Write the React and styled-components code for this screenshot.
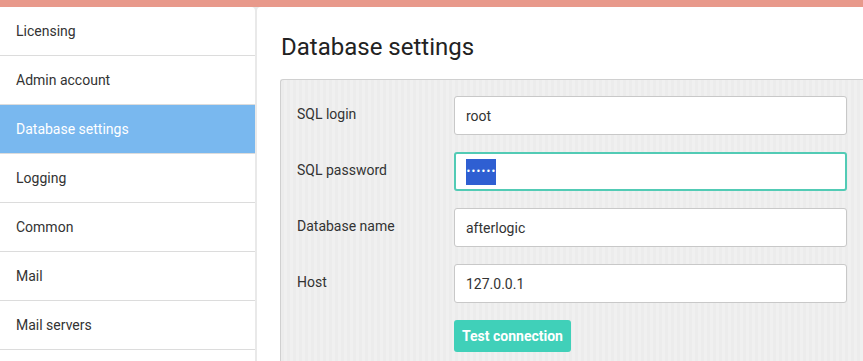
import React from 'react';
import styled, { createGlobalStyle } from 'styled-components';

const Global = createGlobalStyle`
  html, body {
    margin: 0;
    padding: 0;
    background: #e9e9e9;
    font-family: Roboto, "Liberation Sans", sans-serif;
    color: #333;
    overflow: hidden;
  }
`

const TopBar = styled.div`
  height: 7px;
  background: #e8998b;
`

const Layout = styled.div`
  display: flex;
  gap: 2px;
  height: 354px;
  overflow: hidden;
`

const Sidebar = styled.ul`
  list-style: none;
  margin: 0;
  padding: 0;
  width: 255px;
  flex: none;
  background: #fff;
  border-top-right-radius: 4px;
`

const NavItem = styled.li`
  height: 48px;
  display: flex;
  align-items: center;
  padding-left: 16px;
  padding-bottom: 1px;
  box-sizing: border-box;
  height: 49px;
  font-size: 14px;
  border-bottom: 1px solid #dcdcdc;
  background: ${p => (p.$active ? '#79b8ef' : 'transparent')};
  color: ${p => (p.$active ? '#fff' : '#333')};
`

const Panel = styled.div`
  flex: 1;
  background: #fff;
  border-top-left-radius: 4px;
  padding-top: 26px;
`

const Title = styled.h1`
  margin: 0 0 18px 24px;
  font-size: 24px;
  line-height: 28px;
  font-weight: 400;
  color: #222;
`

const Fieldset = styled.div`
  box-sizing: border-box;
  margin-left: 23px;
  height: 290px;
  border: 1px solid #d0d0d0;
  border-right: none;
  border-bottom: none;
  border-top-left-radius: 3px;
  background: repeating-linear-gradient(90deg, #ececec 0 3px, #f0f0f0 3px 6px);
  padding: 16px 0 0 16px;
  display: grid;
  grid-template-columns: 157px 393px;
  grid-auto-rows: 39px;
  row-gap: 17px;
  align-content: start;
  align-items: center;
`

const Label = styled.div`
  font-size: 14px;
  color: #333;
  margin-top: -3px;
`

const Field = styled.div`
  box-sizing: border-box;
  height: 39px;
  background: #fff;
  border: ${p => (p.$focused ? '2px solid #52cbb5' : '1px solid #c8c8c8')};
  border-radius: 3px;
  padding-left: ${p => (p.$focused ? '10px' : '11px')};
  display: flex;
  align-items: center;
  font-size: 14px;
  color: #333;
`

const Selected = styled.span`
  display: inline-flex;
  align-items: center;
  justify-content: center;
  width: 30px;
  height: 26px;
  background: #2f5fd2;
  color: #fff;
  font-size: 8px;
  letter-spacing: 0.3px;
  font-family: "DejaVu Sans", sans-serif;
`

const Button = styled.button`
  grid-column: 2;
  justify-self: start;
  align-self: start;
  height: 32px;
  padding: 0 8px;
  border: none;
  border-radius: 3px;
  background: #40d0b9;
  color: #fff;
  font-family: Roboto, "Liberation Sans", sans-serif;
  font-weight: 700;
  font-size: 14px;
`

const navItems = ['Licensing', 'Admin account', 'Database settings', 'Logging', 'Common', 'Mail', 'Mail servers', ''];

export default function App() {
  return (
    <>
      <Global />
      <TopBar />
      <Layout>
        <Sidebar>
          {navItems.map((item, i) => (
            <NavItem key={i} $active={item === 'Database settings'}>{item}</NavItem>
          ))}
        </Sidebar>
        <Panel>
          <Title>Database settings</Title>
          <Fieldset>
            <Label>SQL login</Label>
            <Field>root</Field>
            <Label>SQL password</Label>
            <Field $focused><Selected>••••••</Selected></Field>
            <Label>Database name</Label>
            <Field>afterlogic</Field>
            <Label>Host</Label>
            <Field>127.0.0.1</Field>
            <Button>Test connection</Button>
          </Fieldset>
        </Panel>
      </Layout>
    </>
  );
}
